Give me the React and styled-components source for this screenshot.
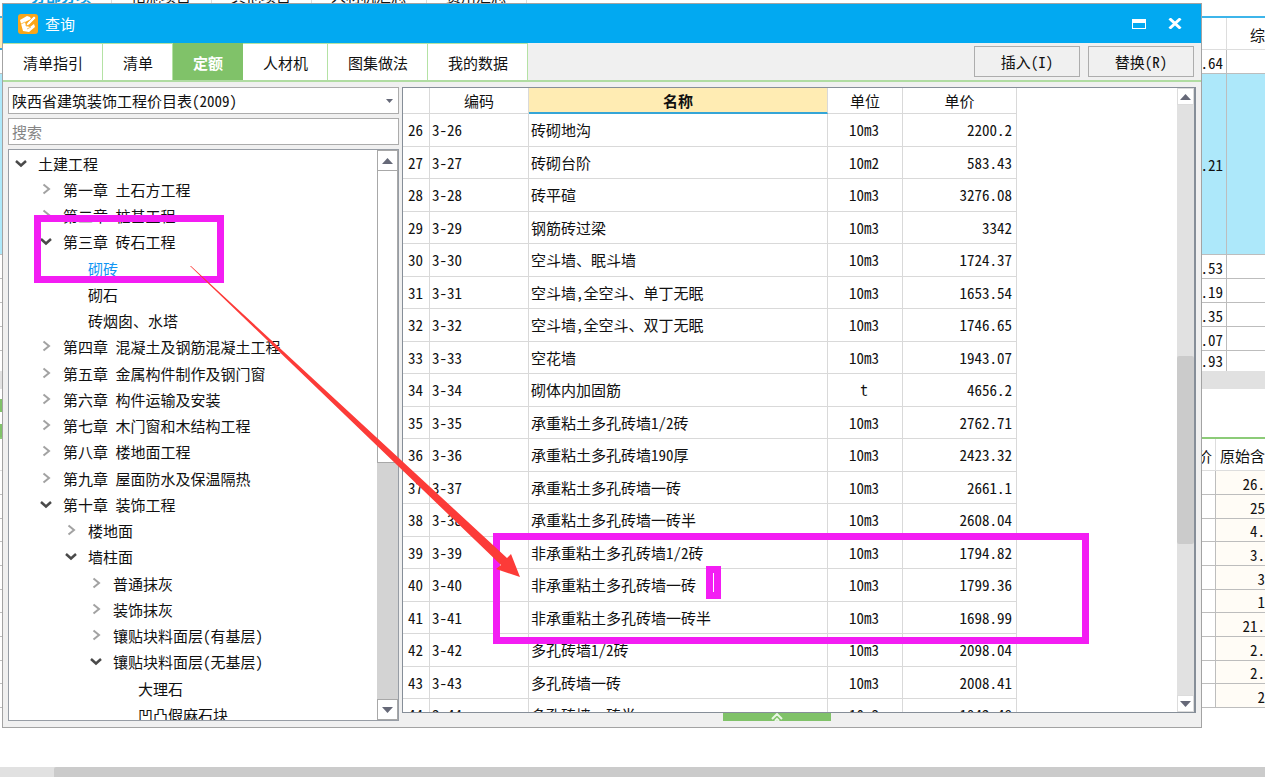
import { useState } from 'react'
import styled, { createGlobalStyle } from 'styled-components'

const GlobalStyle = createGlobalStyle`
  * {
    box-sizing: border-box;
  }
  body {
    margin: 0;
    background: #fff;
  }
  body, button, input, select, table {
    font-family: "Noto Sans CJK SC", "Liberation Sans", sans-serif;
    font-size: 15px;
    line-height: 20px;
    color: #111;
    font-feature-settings: "hwid";
  }
`

const tree = [
  { level: 0, label: '土建工程', state: 'open' },
  { level: 1, label: '第一章 土石方工程', state: 'closed' },
  { level: 1, label: '第二章 桩基工程', state: 'closed' },
  { level: 1, label: '第三章 砖石工程', state: 'open' },
  { level: 2, label: '砌砖' },
  { level: 2, label: '砌石' },
  { level: 2, label: '砖烟囱、水塔' },
  { level: 1, label: '第四章 混凝土及钢筋混凝土工程', state: 'closed' },
  { level: 1, label: '第五章 金属构件制作及钢门窗', state: 'closed' },
  { level: 1, label: '第六章 构件运输及安装', state: 'closed' },
  { level: 1, label: '第七章 木门窗和木结构工程', state: 'closed' },
  { level: 1, label: '第八章 楼地面工程', state: 'closed' },
  { level: 1, label: '第九章 屋面防水及保温隔热', state: 'closed' },
  { level: 1, label: '第十章 装饰工程', state: 'open' },
  { level: 2, label: '楼地面', state: 'closed' },
  { level: 2, label: '墙柱面', state: 'open' },
  { level: 3, label: '普通抹灰', state: 'closed' },
  { level: 3, label: '装饰抹灰', state: 'closed' },
  { level: 3, label: '镶贴块料面层(有基层)', state: 'closed' },
  { level: 3, label: '镶贴块料面层(无基层)', state: 'open' },
  { level: 4, label: '大理石' },
  { level: 4, label: '凹凸假麻石块' },
]

const rows = [
  [26, '砖砌地沟', '10m3', '2200.2'],
  [27, '砖砌台阶', '10m2', '583.43'],
  [28, '砖平碹', '10m3', '3276.08'],
  [29, '钢筋砖过梁', '10m3', '3342'],
  [30, '空斗墙、眠斗墙', '10m3', '1724.37'],
  [31, '空斗墙,全空斗、单丁无眠', '10m3', '1653.54'],
  [32, '空斗墙,全空斗、双丁无眠', '10m3', '1746.65'],
  [33, '空花墙', '10m3', '1943.07'],
  [34, '砌体内加固筋', 't', '4656.2'],
  [35, '承重粘土多孔砖墙1/2砖', '10m3', '2762.71'],
  [36, '承重粘土多孔砖墙190厚', '10m3', '2423.32'],
  [37, '承重粘土多孔砖墙一砖', '10m3', '2661.1'],
  [38, '承重粘土多孔砖墙一砖半', '10m3', '2608.04'],
  [39, '非承重粘土多孔砖墙1/2砖', '10m3', '1794.82'],
  [40, '非承重粘土多孔砖墙一砖', '10m3', '1799.36'],
  [41, '非承重粘土多孔砖墙一砖半', '10m3', '1698.99'],
  [42, '多孔砖墙1/2砖', '10m3', '2098.04'],
  [43, '多孔砖墙一砖', '10m3', '2008.41'],
  [44, '多孔砖墙一砖半', '10m3', '1942.48'],
]

const tabs = ['清单指引', '清单', '定额', '人材机', '图集做法', '我的数据']
const pageTabs = ['分部分项', '措施项目', '其他项目', '人材机汇总', '费用汇总']
const sheetRows = ['.53', '.19', '.35', '.07', '.93']
const detailRows = ['26.', '25', '4.', '3.', '3', '1', '21.', '2.', '2.', '2']

const Page = styled.main`
  display: flex;
  flex-direction: column;
  min-height: 100vh;
  overflow: hidden;
`

const PageTabs = styled.nav`
  display: flex;
  height: 16px;
  padding-left: 12px;
`

const PageTab = styled.a`
  display: flex;
  align-items: flex-end;
  height: 6px;
  padding: 0 20px 0 19px;
  overflow: hidden;
  border-right: 1px solid #ddd;
  color: ${props => (props.$active ? '#0a9fe8' : '#111')};
  font-weight: ${props => (props.$active ? 700 : 400)};
  text-decoration: none;
`

const BackTable = styled.table`
  width: 100%;
  table-layout: fixed;
  border-collapse: separate;
  border-spacing: 0;
  border-top: 2px solid ${props => props.$accent};
  th, td {
    height: 24px;
    padding: 2px 3px 0 0;
    overflow: hidden;
    border-right: 1px solid #bdbdbd;
    border-bottom: 1px solid #bdbdbd;
    text-align: right;
    font-weight: 400;
    white-space: nowrap;
  }
  th {
    height: 32px;
    border-color: #ddd;
  }
  th:last-child, td:last-child {
    border-right: 0;
  }
`

const SheetTable = styled(BackTable)`
  th:first-child {
    background: #ffedb5;
    border-bottom: 2px solid #32a8dc;
  }
  th:last-child {
    padding-left: 23px;
    text-align: left;
  }
  tbody tr:last-child td {
    height: 20px;
    padding-top: 0;
    border-bottom: 0;
  }
`

const SelectedRow = styled.tr`
  background: #ade8fa;
  td {
    height: 181px;
  }
`

const DetailTable = styled(BackTable)`
  th:last-child {
    padding-left: 4px;
    text-align: left;
  }
  td:last-child {
    padding-right: 0;
    background: #fffcf6;
  }
  tr:nth-child(3n) td {
    height: 23px;
  }
`

const SheetScroll = styled.div`
  height: 18px;
  background: #e1e1e1;
`

const Toolbar = styled.div`
  display: flex;
  flex-direction: column;
  gap: 12px;
  height: 48px;
  padding-top: 10px;
`

const ToolbarBlock = styled.span`
  width: 20px;
  height: 13px;
  background: #80c269;
`

const PageScroll = styled.div`
  height: 10px;
  margin-top: auto;
  padding-left: 54px;
  background: #e1e1e1;
`

const PageThumb = styled.div`
  height: 100%;
  border-radius: 2px 0 0 0;
  background: #cbcbcb;
`

const Dialog = styled.section`
  position: absolute;
  inset: 3px 63px 49px 2px;
  display: flex;
  flex-direction: column;
  border: 1px solid #a3a3a3;
  background: #f0f0f0;
  overflow: hidden;
`

const TitleBar = styled.header`
  display: flex;
  align-items: center;
  flex: 0 0 39px;
  padding: 0 17px 0 15px;
  gap: 7px;
  background: #02a9f1;
  color: #fff;
`

const Title = styled.h1`
  flex: 1;
  margin: 0;
  font-size: 15px;
  font-weight: 400;
`

const WindowButton = styled.button`
  display: flex;
  align-items: center;
  justify-content: center;
  width: 18px;
  height: 20px;
  margin-left: 11px;
  padding: 0;
  border: 0;
  background: none;
`

const TabBar = styled.div`
  display: flex;
  align-items: stretch;
  flex: 0 0 39px;
  border-bottom: 2px solid #b0dca2;
`

const Tab = styled.button`
  padding: 2px 19px 0 20px;
  border: 0 solid ${props => (props.$active ? '#80c269' : '#b4e2a4')};
  border-top-width: 1px;
  border-right-width: 1px;
  background: ${props => (props.$active ? '#80c269' : '#fff')};
  color: ${props => (props.$active ? '#fff' : '#111')};
  font-weight: ${props => (props.$active ? 700 : 400)};
`

const Actions = styled.div`
  display: flex;
  align-items: center;
  gap: 8px;
  margin-left: auto;
  padding-right: 7px;
`

const ActionButton = styled.button`
  width: 106px;
  height: 31px;
  border: 1px solid #adadad;
  background: #f0f0f0;
`

const Body = styled.div`
  display: flex;
  flex: 1;
  gap: 3px;
  min-height: 0;
  padding: 5px 5px 6px;
`

const SidePanel = styled.aside`
  display: flex;
  flex-direction: column;
  flex: 0 0 391px;
  gap: 4px;
`

const SelectWrap = styled.label`
  position: relative;
  display: block;
  svg {
    position: absolute;
    right: 6px;
    top: 12px;
    pointer-events: none;
  }
`

const PriceSelect = styled.select`
  display: block;
  appearance: none;
  width: 100%;
  height: 27px;
  padding: 0 20px 0 3px;
  border: 1px solid #acacac;
  border-radius: 0;
  background: #fff;
`

const Search = styled.input`
  width: 100%;
  height: 27px;
  padding: 0 3px;
  border: 1px solid #acacac;
  &::placeholder {
    color: #858585;
    opacity: 1;
  }
`

const TreeBox = styled.div`
  display: flex;
  flex: 1;
  min-height: 0;
  overflow: hidden;
  border: 1px solid #979da5;
  background: #fff;
`

const TreeList = styled.ul`
  flex: 1;
  height: 0;
  margin: 0;
  padding: 1px 0 0;
  list-style: none;
`

const TreeRow = styled.li`
  height: 26px;
  padding-left: ${props => 4 + props.$level * 25}px;
  &:nth-child(4n) {
    height: 27px;
  }
`

const TreeButton = styled.button`
  display: flex;
  align-items: center;
  gap: 9px;
  height: 26px;
  padding: 0;
  border: 0;
  background: none;
  color: ${props => (props.$selected ? '#1296f3' : '#111')};
  white-space: nowrap;
`

const Twisty = styled.svg`
  flex: none;
  width: 16px;
  height: 16px;
  fill: none;
  stroke: ${props => (props.$open ? '#4a4a4a' : '#a2a2a2')};
  stroke-width: ${props => (props.$open ? 2.5 : 2)};
`

const TreeScroll = styled.div`
  display: flex;
  flex-direction: column;
  justify-content: space-between;
  width: 21px;
  background: #d3d3d3;
`

const ScrollButton = styled.button`
  display: flex;
  align-items: center;
  justify-content: center;
  flex: 0 0 ${props => props.$size}px;
  padding: 0;
  border: 1px solid ${props => props.$line};
  background: #fff;
`

const TreeThumb = styled.div`
  height: 292px;
  margin-bottom: auto;
  border: 1px solid #a8a8a8;
  border-top: 0;
  background: #fff;
`

const GridPanel = styled.div`
  display: flex;
  flex-direction: column;
  flex: 1;
  min-width: 0;
`

const GridBox = styled.div`
  display: flex;
  justify-content: space-between;
  flex: 1;
  min-height: 0;
  overflow: hidden;
  border: 1px solid #868e98;
  border-right-width: 2px;
  background: #fff;
`

const GridTable = styled.table`
  width: 614px;
  height: 0;
  table-layout: fixed;
  border-collapse: separate;
  border-spacing: 0;
`

const HeadCell = styled.th`
  height: 26px;
  padding: ${props => (props.$active ? '2px' : '1px')} 0 0;
  border-right: 1px solid #d9d9d9;
  border-bottom: ${props => (props.$active ? '2px solid #35a5d6' : '1px solid #d9d9d9')};
  background: ${props => (props.$active ? '#ffecb3' : '#fff')};
  font-weight: ${props => (props.$active ? 700 : 400)};
`

const Row = styled.tr`
  height: 33px;
  &:nth-child(even) {
    height: 32px;
  }
`

const Cell = styled.td`
  padding: 0 4px 0 2px;
  border-right: 1px solid #d9d9d9;
  border-bottom: 1px solid #d9d9d9;
  text-align: ${props => props.$align || 'left'};
  white-space: nowrap;
`

const NumberCell = styled(Cell)`
  padding: 0 0 0 5px;
`

const GridScroll = styled.div`
  display: flex;
  flex-direction: column;
  width: 17px;
  background: #e1e1e1;
`

const GridThumb = styled.div`
  flex: 0 0 188px;
  margin-top: auto;
  margin-bottom: 151px;
  border-radius: 2px;
  background: #cbcbcb;
`

const Collapse = styled.button`
  display: flex;
  justify-content: center;
  align-items: center;
  width: 108px;
  height: 8px;
  margin-left: 321px;
  padding: 0;
  border: 0;
  background: #80c269;
`

const Mark = styled.div`
  position: absolute;
  left: ${props => props.$x}px;
  top: ${props => props.$y}px;
  width: ${props => props.$w}px;
  height: ${props => props.$h}px;
  border: 7px solid #f31df3;
  pointer-events: none;
`

const Arrow = styled.svg`
  position: absolute;
  left: 190px;
  top: 266px;
  pointer-events: none;
`

function Triangle({ down, small }) {
  return (
    <svg width={small ? 7 : 11} height={small ? 4 : 6} viewBox="0 0 11 6" fill="#666978">
      <path d={down ? 'M0 0H11L5.5 6Z' : 'M0 6H11L5.5 0Z'} />
    </svg>
  )
}

function AppIcon() {
  return (
    <svg width="20" height="20" viewBox="0 0 20 20">
      <rect width="20" height="20" rx="3" fill="#faa61a" />
      <path d="M2 6 9 2 12 3 13 5 7 8 8 12 12 13 16 10 17 13 11 18 5 17Z" fill="#fff" />
      <path d="M8 12 9 9 16 2 18 4 11 11Z" fill="#fff" stroke="#faa61a" strokeWidth="0.7" />
      <path d="M3 10 7 8M9 15 13 13" stroke="#fbc15c" />
    </svg>
  )
}

function TreeItem({ item, selected, onSelect }) {
  const open = item.state === 'open'
  return (
    <TreeRow $level={item.level}>
      <TreeButton $selected={selected} onClick={() => onSelect(item.label)}>
        <Twisty $open={open} viewBox="0 0 16 16">
          {item.state && <path d={open ? 'M3 5 8 9.5 13 5' : 'M5.5 2.5 11 7 5.5 11.5'} />}
        </Twisty>
        {item.label}
      </TreeButton>
    </TreeRow>
  )
}

export default function App() {
  const [tab, setTab] = useState('定额')
  const [selected, setSelected] = useState('砌砖')
  const [search, setSearch] = useState('')

  return (
    <Page>
      <GlobalStyle />
      <PageTabs>
        {pageTabs.map((label, i) => (
          <PageTab key={label} href="#" $active={i === 0}>{label}</PageTab>
        ))}
      </PageTabs>
      <SheetTable $accent="#3db5ea">
        <colgroup>
          <col width="4" />
          <col />
          <col width="38" />
        </colgroup>
        <thead>
          <tr><th /><th /><th>综</th></tr>
        </thead>
        <tbody>
          <tr><td /><td>.64</td><td /></tr>
          <SelectedRow><td /><td>.21</td><td /></SelectedRow>
          {sheetRows.map(value => (
            <tr key={value}><td /><td>{value}</td><td /></tr>
          ))}
        </tbody>
      </SheetTable>
      <SheetScroll />
      <Toolbar>
        <ToolbarBlock />
        <ToolbarBlock />
      </Toolbar>
      <DetailTable $accent="#8ccb78">
        <colgroup>
          <col />
          <col width="49" />
        </colgroup>
        <thead>
          <tr><th>价</th><th>原始含</th></tr>
        </thead>
        <tbody>
          {detailRows.map((value, i) => (
            <tr key={i}><td /><td>{value}</td></tr>
          ))}
        </tbody>
      </DetailTable>
      <PageScroll><PageThumb /></PageScroll>

      <Dialog>
        <TitleBar>
          <AppIcon />
          <Title>查询</Title>
          <WindowButton aria-label="最大化">
            <svg width="14" height="10" viewBox="0 0 14 10">
              <path d="M0 0H14V10H0ZM1 4V9H13V4Z" fill="#fff" fillRule="evenodd" />
            </svg>
          </WindowButton>
          <WindowButton aria-label="关闭">
            <svg width="14" height="11" viewBox="0 0 14 11">
              <path d="M1.5 .5 12.5 10.5M12.5 .5 1.5 10.5" stroke="#fff" strokeWidth="3" />
            </svg>
          </WindowButton>
        </TitleBar>
        <TabBar>
          {tabs.map(label => (
            <Tab key={label} $active={tab === label} onClick={() => setTab(label)}>{label}</Tab>
          ))}
          <Actions>
            <ActionButton>插入(I)</ActionButton>
            <ActionButton>替换(R)</ActionButton>
          </Actions>
        </TabBar>
        <Body>
          <SidePanel>
            <SelectWrap>
              <PriceSelect aria-label="价目表">
                <option>陕西省建筑装饰工程价目表(2009)</option>
              </PriceSelect>
              <Triangle down small />
            </SelectWrap>
            <Search
              aria-label="搜索"
              placeholder="搜索"
              value={search}
              onChange={e => setSearch(e.target.value)}
            />
            <TreeBox>
              <TreeList>
                {tree.map(item => (
                  <TreeItem
                    key={item.label}
                    item={item}
                    selected={item.label === selected}
                    onSelect={setSelected}
                  />
                ))}
              </TreeList>
              <TreeScroll>
                <ScrollButton $size={21} $line="#a8a8a8" aria-label="向上"><Triangle /></ScrollButton>
                <TreeThumb />
                <ScrollButton $size={21} $line="#a8a8a8" aria-label="向下"><Triangle down /></ScrollButton>
              </TreeScroll>
            </TreeBox>
          </SidePanel>
          <GridPanel>
            <GridBox>
              <GridTable>
                <colgroup>
                  <col width="27" />
                  <col width="99" />
                  <col width="299" />
                  <col width="75" />
                  <col width="114" />
                </colgroup>
                <thead>
                  <tr>
                    <HeadCell />
                    <HeadCell>编码</HeadCell>
                    <HeadCell $active>名称</HeadCell>
                    <HeadCell>单位</HeadCell>
                    <HeadCell>单价</HeadCell>
                  </tr>
                </thead>
                <tbody>
                  {rows.map(([no, name, unit, price]) => (
                    <Row key={no}>
                      <NumberCell>{no}</NumberCell>
                      <Cell>3-{no}</Cell>
                      <Cell>{name}</Cell>
                      <Cell $align="center">{unit}</Cell>
                      <Cell $align="right">{price}</Cell>
                    </Row>
                  ))}
                </tbody>
              </GridTable>
              <GridScroll>
                <ScrollButton $size={17} $line="#dcdcdc" aria-label="向上"><Triangle /></ScrollButton>
                <GridThumb />
                <ScrollButton $size={17} $line="#dcdcdc" aria-label="向下"><Triangle down /></ScrollButton>
              </GridScroll>
            </GridBox>
            <Collapse aria-label="展开">
              <svg width="12" height="8" viewBox="0 0 12 8" fill="none" stroke="#e9f7e4" strokeWidth="2">
                <path d="M1 6 6 1 11 6M4 8 6 6 8 8" />
              </svg>
            </Collapse>
          </GridPanel>
        </Body>
      </Dialog>

      <Mark $x={34} $y={215} $w={190} $h={68} />
      <Mark $x={493} $y={533} $w={596} $h={111} />
      <Mark $x={706} $y={566} $w={15} $h={33} />
      <Arrow width="332" height="312" viewBox="0 0 332 312" fill="#fc3b38">
        <path d="M0 0 1 0 317 292 321 288 330 311 306 303 311 299Z" />
      </Arrow>
    </Page>
  )
}
